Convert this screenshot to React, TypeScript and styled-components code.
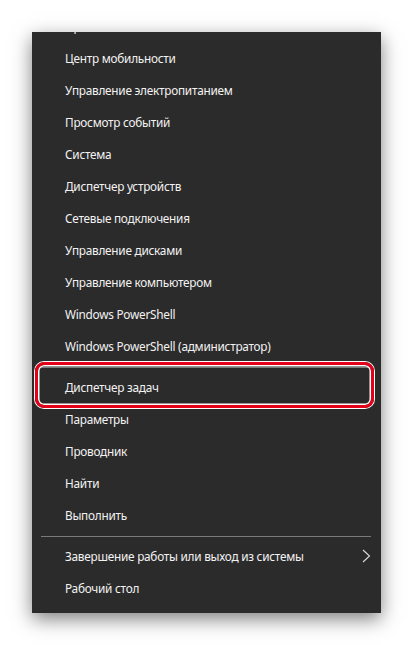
import React from 'react';
import styled, { createGlobalStyle } from 'styled-components';

const GlobalStyle = createGlobalStyle`
  html, body {
    margin: 0;
    padding: 0;
    background: #ffffff;
  }
  body {
    font-family: 'Noto Sans', 'Open Sans', sans-serif;
  }
`;

const Page = styled.div`
  width: 413px;
  height: 645px;
  padding: 32px 0 0 32px;
  box-sizing: border-box;
  background: #ffffff;
`;

const Panel = styled.div`
  position: relative;
  width: 349px;
  height: 581px;
  background: #2b2b2b;
  box-shadow: 0 6px 18px rgba(0, 0, 0, 0.5);
  overflow: hidden;
`;

const List = styled.ul`
  list-style: none;
  margin: -22px 0 0;
  padding: 0;
`;

const Item = styled.li`
  display: flex;
  align-items: center;
  justify-content: space-between;
  height: 32px;
  padding: 0 10px 0 33px;
  color: #f2f2f2;
  font-size: 11.8px;
  letter-spacing: -0.25px;
  line-height: 32px;
  white-space: nowrap;
`;

const Separator = styled.li`
  height: 1px;
  margin: 5px 10px 3px 9px;
  background: #7a7a7a;
`;

const Chevron = styled.svg`
  width: 9px;
  height: 14px;
  display: block;
`;

const Highlight = styled.div`
  position: absolute;
  left: 3px;
  top: 330px;
  width: 339px;
  height: 46px;
  box-sizing: border-box;
  border: 3px solid #e5001a;
  border-radius: 9px;
  box-shadow: 0 0 0 1px #ffffff, inset 0 0 0 1.5px #ffffff;
  pointer-events: none;
`;

type Entry = { label: string; submenu?: boolean } | 'sep';

const entries: Entry[] = [
  { label: 'Приложения и возможности' },
  { label: 'Центр мобильности' },
  { label: 'Управление электропитанием' },
  { label: 'Просмотр событий' },
  { label: 'Система' },
  { label: 'Диспетчер устройств' },
  { label: 'Сетевые подключения' },
  { label: 'Управление дисками' },
  { label: 'Управление компьютером' },
  { label: 'Windows PowerShell' },
  { label: 'Windows PowerShell (администратор)' },
  'sep',
  { label: 'Диспетчер задач' },
  { label: 'Параметры' },
  { label: 'Проводник' },
  { label: 'Найти' },
  { label: 'Выполнить' },
  'sep',
  { label: 'Завершение работы или выход из системы', submenu: true },
  { label: 'Рабочий стол' },
];

export default function App() {
  return (
    <>
      <GlobalStyle />
      <Page>
        <Panel>
          <List>
            {entries.map((e, i) =>
              e === 'sep' ? (
                <Separator key={i} />
              ) : (
                <Item key={i}>
                  <span>{e.label}</span>
                  {e.submenu && (
                    <Chevron viewBox="0 0 9 14">
                      <path d="M1 1l6.5 6-6.5 6" fill="none" stroke="#dcdcdc" strokeWidth="1.1" />
                    </Chevron>
                  )}
                </Item>
              )
            )}
          </List>
          <Highlight />
        </Panel>
      </Page>
    </>
  );
}
